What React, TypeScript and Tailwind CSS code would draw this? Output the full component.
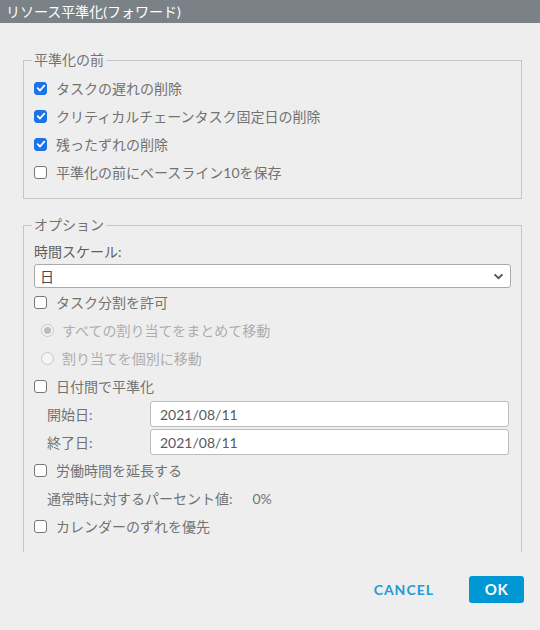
import { useState } from "react";

const font = "font-['Lato','Noto_Sans_CJK_JP',sans-serif]";

function Check({ checked, onChange }: { checked: boolean; onChange: () => void }) {
  return (
    <span
      onClick={onChange}
      className={`flex h-[13px] w-[13px] shrink-0 items-center justify-center rounded-[3px] border ${
        checked ? "border-[#1a73e8] bg-[#1a73e8]" : "border-[#767676] bg-white"
      }`}
    >
      {checked && (
        <svg viewBox="0 0 12 12" className="h-[10px] w-[10px]">
          <path d="M2 6.2 4.8 9 10 3.2" fill="none" stroke="white" strokeWidth="2.2" strokeLinecap="round" strokeLinejoin="round" />
        </svg>
      )}
    </span>
  );
}

function CheckRow({ label, initial = false }: { label: string; initial?: boolean }) {
  const [on, setOn] = useState(initial);
  return (
    <label className="flex h-[28px] items-center gap-[9px] text-[#727272]">
      <Check checked={on} onChange={() => setOn(!on)} />
      <span>{label}</span>
    </label>
  );
}

function Radio({ label, checked }: { label: string; checked?: boolean }) {
  return (
    <div className="flex h-[28px] items-center gap-[8px] pl-[7px] text-[#adadad]">
      <span className="flex h-[13px] w-[13px] items-center justify-center rounded-full border border-[#c8c8c8] bg-[#f4f4f4]">
        {checked && <span className="h-[7px] w-[7px] rounded-full bg-[#bdbdbd]" />}
      </span>
      <span>{label}</span>
    </div>
  );
}

function DateRow({ label, value }: { label: string; value: string }) {
  return (
    <div className="flex h-[28px] items-center pl-[13px] pr-[2px] text-[#727272]">
      <span className="w-[103px]">{label}</span>
      <div className="flex h-[26px] flex-1 items-center rounded-[3px] border border-[#bdbdbd] bg-white pl-[9px] text-[#5a5a5a]">
        {value}
      </div>
    </div>
  );
}

export default function App() {
  return (
    <div className={`flex h-[630px] w-[540px] flex-col bg-[#eeeeee] text-[14px] ${font}`}>
      <div className="flex h-[23px] items-center bg-[#7a8288] px-[6px] text-[14px] leading-none text-white">
        リソース平準化(フォワード)
      </div>

      <div className="h-[529px] overflow-hidden pl-[23px] pr-[18px] pt-[27px]">
        <fieldset className="border border-[#c6c6c6] pb-[12px] pl-[10px] pr-[10px]">
          <legend className="-ml-[2px] px-[2px] leading-[20px] text-[#727272]">平準化の前</legend>
          <div className="pt-[4px]">
            <CheckRow label="タスクの遅れの削除" initial />
            <CheckRow label="クリティカルチェーンタスク固定日の削除" initial />
            <CheckRow label="残ったずれの削除" initial />
            <CheckRow label="平準化の前にベースライン10を保存" />
          </div>
        </fieldset>

        <fieldset className="mt-[16px] border border-[#c6c6c6] pb-[24px] pl-[10px] pr-[10px]">
          <legend className="-ml-[2px] px-[2px] leading-[20px] text-[#727272]">オプション</legend>
          <div className="pt-[7px]">
            <div className="h-[20px] leading-[20px] text-[#5e5e5e]">時間スケール:</div>
            <div className="mt-[2px] flex h-[24px] items-center justify-between rounded-[3px] border border-[#aaa] bg-white pl-[5px] pr-[6px] text-[#4a4a4a]">
              <span>日</span>
              <svg viewBox="0 0 12 8" className="h-[7px] w-[11px]">
                <path d="M1.5 1.5 6 6 10.5 1.5" fill="none" stroke="#555" strokeWidth="2.2" />
              </svg>
            </div>
            <CheckRow label="タスク分割を許可" />
            <Radio label="すべての割り当てをまとめて移動" checked />
            <Radio label="割り当てを個別に移動" />
            <CheckRow label="日付間で平準化" />
            <DateRow label="開始日:" value="2021/08/11" />
            <DateRow label="終了日:" value="2021/08/11" />
            <CheckRow label="労働時間を延長する" />
            <div className="flex h-[28px] items-center pl-[13px] text-[#727272]">
              <span>通常時に対するパーセント値:</span>
              <span className="ml-[20px]">0%</span>
            </div>
            <CheckRow label="カレンダーのずれを優先" />
          </div>
        </fieldset>
      </div>

      <div className="flex flex-1 items-center justify-end gap-[25px] pb-[4px] pr-[16px]">
        <button className="px-[10px] text-[14px] font-bold tracking-[1px] text-[#1f9bd7]">CANCEL</button>
        <button className="h-[27px] w-[55px] rounded-[3px] bg-[#0098d4] text-[15px] font-bold tracking-[0.5px] text-white">
          OK
        </button>
      </div>
    </div>
  );
}
